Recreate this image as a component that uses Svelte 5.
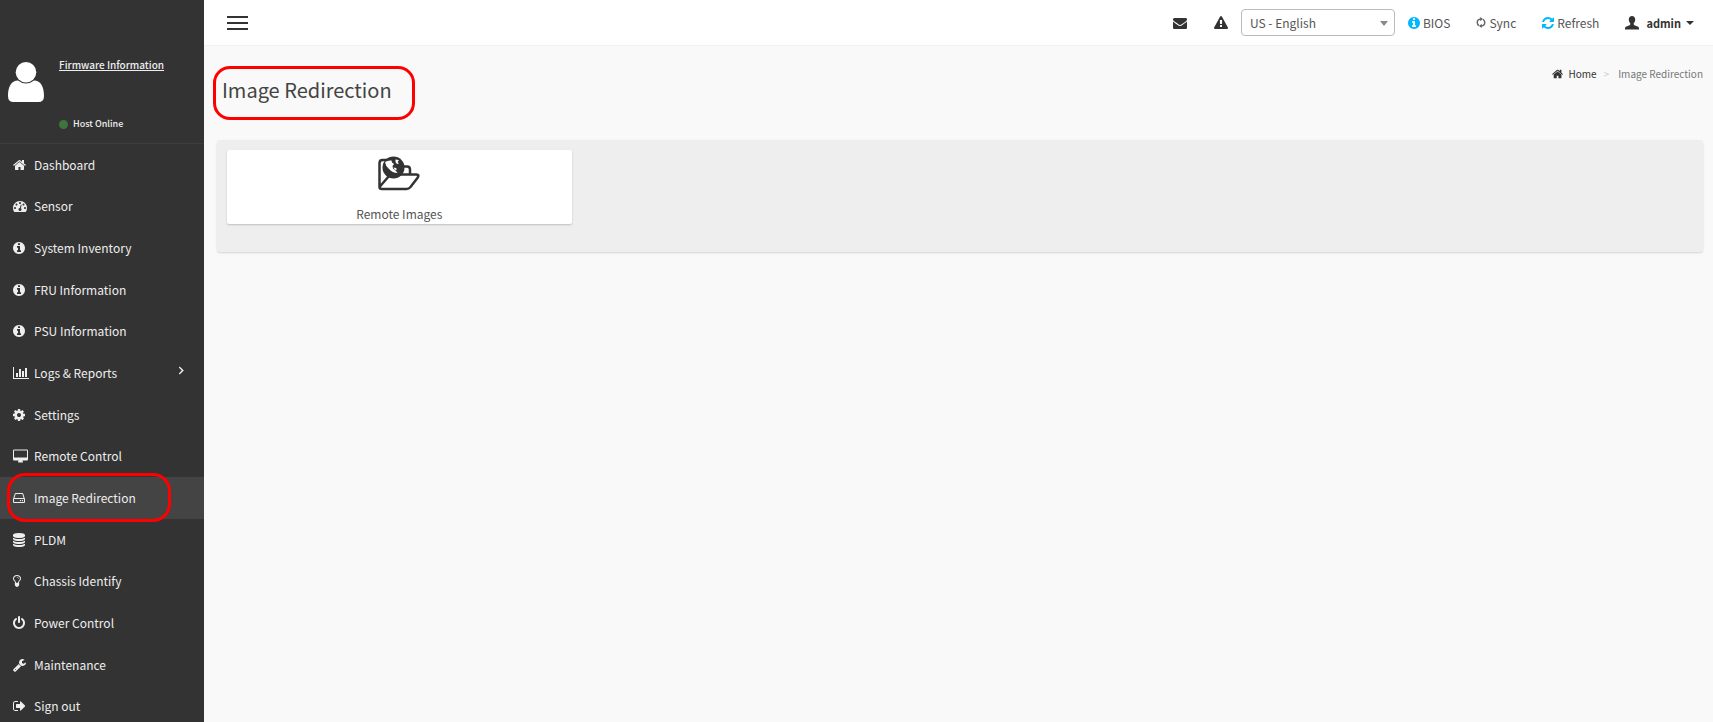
<script>
    const icons = {
        home: { box: "64 0 1664 1792", d: "M1472 992v480q0 26-19 45t-45 19h-384v-384h-256v384h-384q-26 0-45-19t-19-45v-480q0-1 .5-3t.5-3l575-474 575 474q1 2 1 6zm223-69l-62 74q-8 9-21 11h-3q-13 0-21-7l-692-577-692 577q-12 8-24 7-13-2-21-11l-62-74q-8-10-7-23.5t11-21.5l719-599q32-26 76-26t76 26l244 204v-195q0-14 9-23t23-9h192q14 0 23 9t9 23v408l219 182q10 8 11 21.5t-7 23.5z" },
        gauge: { box: "0 0 1792 1792", d: "M384 1152q0-53-37.5-90.5t-90.5-37.5-90.5 37.5-37.5 90.5 37.5 90.5 90.5 37.5 90.5-37.5 37.5-90.5zm192-448q0-53-37.5-90.5t-90.5-37.5-90.5 37.5-37.5 90.5 37.5 90.5 90.5 37.5 90.5-37.5 37.5-90.5zm428 481l101-382q6-26-7.5-48.5t-38.5-29.5-48 6.5-30 39.5l-101 382q-60 5-107 43.5t-63 98.5q-20 77 20 146t117 89 146-20 89-117q16-60-6-117t-72-91zm660-33q0-53-37.5-90.5t-90.5-37.5-90.5 37.5-37.5 90.5 37.5 90.5 90.5 37.5 90.5-37.5 37.5-90.5zm-640-640q0-53-37.5-90.5t-90.5-37.5-90.5 37.5-37.5 90.5 37.5 90.5 90.5 37.5 90.5-37.5 37.5-90.5zm448 192q0-53-37.5-90.5t-90.5-37.5-90.5 37.5-37.5 90.5 37.5 90.5 90.5 37.5 90.5-37.5 37.5-90.5zm320 448q0 261-141 483-19 29-54 29h-1402q-35 0-54-29-141-221-141-483 0-182 71-348t191-286 286-191 348-71 348 71 286 191 191 286 71 348z" },
        info: { box: "128 0 1536 1792", d: "M1152 1376v-160q0-14-9-23t-23-9h-96v-512q0-14-9-23t-23-9h-320q-14 0-23 9t-9 23v160q0 14 9 23t23 9h96v320h-96q-14 0-23 9t-9 23v160q0 14 9 23t23 9h448q14 0 23-9t9-23zm-128-896v-160q0-14-9-23t-23-9h-192q-14 0-23 9t-9 23v160q0 14 9 23t23 9h192q14 0 23-9t9-23zm640 416q0 209-103 385.5t-279.5 279.5-385.5 103-385.5-103-279.5-279.5-103-385.5 103-385.5 279.5-279.5 385.5-103 385.5 103 279.5 279.5 103 385.5z" },
        chart: { box: "0 0 2048 1792", d: "M640 896v512h-256v-512h256zm384-512v1024h-256v-1024h256zm1024 1152v128h-2048v-1536h128v1408h1920zm-640-896v768h-256v-768h256zm384-384v1152h-256v-1152h256z" },
        cog: { box: "128 0 1536 1792", d: "M1152 896q0-106-75-181t-181-75-181 75-75 181 75 181 181 75 181-75 75-181zm512-109v222q0 12-8 23t-20 13l-185 28q-19 54-39 91 35 50 107 138 10 12 10 25t-9 23q-27 37-99 108t-94 71q-12 0-26-9l-138-108q-44 23-91 38-16 136-29 186-7 28-36 28h-222q-14 0-24.5-8.5t-11.5-21.5l-28-184q-49-16-90-37l-141 107q-10 9-25 9-14 0-25-11-126-114-165-168-7-10-7-23 0-12 8-23 15-21 51-66.5t54-70.5q-27-50-41-99l-183-27q-13-2-21-12.5t-8-23.5v-222q0-12 8-23t19-13l186-28q14-46 39-92-40-57-107-138-10-12-10-24 0-10 9-23 26-36 98.5-107.5t94.5-71.5q13 0 26 10l138 107q44-23 91-38 16-136 29-186 7-28 36-28h222q14 0 24.5 8.5t11.5 21.5l28 184q49 16 90 37l142-107q9-9 24-9 13 0 25 10 129 119 165 170 7 8 7 22 0 12-8 23-15 21-51 66.5t-54 70.5q26 50 41 98l183 28q13 2 21 12.5t8 23.5z" },
        desktop: { box: "64 -64 1920 1792", d: "M1856 992v-832q0-13-9.5-22.5t-22.5-9.5h-1600q-13 0-22.5 9.5t-9.5 22.5v832q0 13 9.5 22.5t22.5 9.5h1600q13 0 22.5-9.5t9.5-22.5zm128-832v1088q0 66-47 113t-113 47h-544q0 37 16 77.5t32 71 16 43.5q0 26-19 45t-45 19h-512q-26 0-45-19t-19-45q0-14 16-44t32-70 16-78h-544q-66 0-113-47t-47-113v-1088q0-66 47-113t113-47h1600q66 0 113 47t47 113z" },
        hdd: { box: "128 0 1536 1792", d: "M1168 1216q0 33-23.5 56.5t-56.5 23.5-56.5-23.5-23.5-56.5 23.5-56.5 56.5-23.5 56.5 23.5 23.5 56.5zm256 0q0 33-23.5 56.5t-56.5 23.5-56.5-23.5-23.5-56.5 23.5-56.5 56.5-23.5 56.5 23.5 23.5 56.5zm112 160v-320q0-13-9.5-22.5t-22.5-9.5h-1216q-13 0-22.5 9.5t-9.5 22.5v320q0 13 9.5 22.5t22.5 9.5h1216q13 0 22.5-9.5t9.5-22.5zm-1230-480h1180l-157-482q-4-13-16-21.5t-26-8.5h-782q-14 0-26 8.5t-16 21.5zm1358 160v320q0 66-47 113t-113 47h-1216q-66 0-113-47t-47-113v-320q0-25 16-75l197-606q17-53 63-86t101-33h782q55 0 101 33t63 86l197 606q16 50 16 75z" },
        database: { box: "128 0 1536 1792", d: "M896 768q237 0 443-43t325-127v170q0 69-103 128t-280 93.5-385 34.5-385-34.5-280-93.5-103-128v-170q119 84 325 127t443 43zm0 768q237 0 443-43t325-127v170q0 69-103 128t-280 93.5-385 34.5-385-34.5-280-93.5-103-128v-170q119 84 325 127t443 43zm0-384q237 0 443-43t325-127v170q0 69-103 128t-280 93.5-385 34.5-385-34.5-280-93.5-103-128v-170q119 84 325 127t443 43zm0-1152q208 0 385 34.5t280 93.5 103 128v128q0 69-103 128t-280 93.5-385 34.5-385-34.5-280-93.5-103-128v-128q0-69 103-128t280-93.5 385-34.5z" },
        bulb: { box: "384 0 1024 1792", d: "M1120 576q0 13-9.5 22.5t-22.5 9.5-22.5-9.5-9.5-22.5q0-46-54-71t-106-25q-13 0-22.5-9.5t-9.5-22.5 9.5-22.5 22.5-9.5q50 0 99.5 16t87 54 37.5 90zm160 0q0-72-34.5-134t-90-101.5-123-62-136.5-22.5-136.5 22.5-123 62-90 101.5-34.5 134q0 101 68 180 10 11 30.5 33t30.5 33q128 153 141 298h228q13-145 141-298 10-11 30.5-33t30.5-33q68-79 68-180zm128 0q0 155-103 268-45 49-74.5 87t-59.5 95.5-34 107.5q47 28 47 82 0 37-25 64 25 27 25 64 0 52-45 81 13 23 13 47 0 46-31.5 71t-77.5 25q-20 44-60 70t-87 26-87-26-60-70q-46 0-77.5-25t-31.5-71q0-24 13-47-45-29-45-81 0-37 25-64-25-27-25-64 0-54 47-82-4-50-34-107.5t-59.5-95.5-74.5-87q-103-113-103-268 0-99 44.5-184.5t117-142 164-89 186.5-32.5 186.5 32.5 164 89 117 142 44.5 184.5z" },
        power: { box: "128 0 1536 1792", d: "M1664 896q0 156-61 298t-164 245-245 164-298 61-298-61-245-164-164-245-61-298q0-182 80.5-343t226.5-270q43-32 95.5-25t83.5 50q32 42 24.5 94.5t-49.5 84.5q-98 74-151.5 181t-53.5 228q0 104 40.5 198.5t109.5 163.5 163.5 109.5 198.5 40.5 198.5-40.5 163.5-109.5 109.5-163.5 40.5-198.5q0-121-53.5-228t-151.5-181q-42-32-49.5-84.5t24.5-94.5q31-43 84-50t95 25q146 109 226.5 270t80.5 343zm-640-768v640q0 52-38 90t-90 38-90-38-38-90v-640q0-52 38-90t90-38 90 38 38 90z" },
        wrench: { box: "64 0 1664 1792", d: "M448 1472q0-26-19-45t-45-19-45 19-19 45 19 45 45 19 45-19 19-45zm644-420l-682 682q-37 37-90 37-52 0-91-37l-106-108q-38-36-38-90 0-53 38-91l681-681q39 98 114.5 173.5t173.5 114.5zm634-435q0 39-23 106-47 134-164.5 217.5t-258.5 83.5q-185 0-316.5-131.5t-131.5-316.5 131.5-316.5 316.5-131.5q58 0 121.5 16.5t107.5 46.5q16 11 16 28t-16 28l-293 169v224l193 107q5-3 79-48.5t135.5-81 70.5-35.5q15 0 23.5 10t8.5 25z" },
        signout: { box: "64 0 1568 1792", d: "M704 1440q0 4 1 20t.5 26.5-3 23.5-10 19.5-20.5 6.5h-320q-119 0-203.5-84.5t-84.5-203.5v-704q0-119 84.5-203.5t203.5-84.5h320q13 0 22.5 9.5t9.5 22.5q0 4 1 20t.5 26.5-3 23.5-10 19.5-20.5 6.5h-320q-66 0-113 47t-47 113v704q0 66 47 113t113 47h312l11.5 1 11.5 3 8 5.5 7 9 2 13.5zm928-544q0 26-19 45l-544 544q-19 19-45 19t-45-19-19-45v-288h-448q-26 0-45-19t-19-45v-384q0-26 19-45t45-19h448v-288q0-26 19-45t45-19 45 19l544 544q19 19 19 45z" },
        angle: { box: "576 0 640 1792", d: "M1171 960q0 13-10 23l-466 466q-10 10-23 10t-23-10l-80-80q-10-10-10-23t10-23l363-363-363-363q-10-10-10-23t10-23l80-80q10-10 23-10t23 10l466 466q10 10 10 23z" },
        envelope: { box: "0 0 1792 1792", d: "M1792 710v794q0 66-47 113t-113 47h-1472q-66 0-113-47t-47-113v-794q44 49 101 87 362 246 497 345 57 42 92.5 65.5t94.5 48 110 24.5h2q51 0 110-24.5t94.5-48 92.5-65.5q170-123 498-345 57-39 100-87zm0-294q0 79-49 151t-122 123q-376 261-468 325-10 7-42.5 31t-54 38.5-52 32.5-57.5 27-50 9h-2q-23 0-50-9t-57.5-27-52-32.5-54-38.5-42.5-31q-91-64-262-182.5t-205-142.5q-62-42-117-115.5t-55-136.5q0-78 41.5-130t118.5-52h1472q65 0 112.5 47t47.5 113z" },
        warning: { box: "0 0 1792 1792", d: "M1024 1375v-190q0-14-9.5-23.5t-22.5-9.5h-192q-13 0-22.5 9.5t-9.5 23.5v190q0 14 9.5 23.5t22.5 9.5h192q13 0 22.5-9.5t9.5-23.5zm-2-374l18-459q0-12-10-19-13-11-24-11h-220q-11 0-24 11-10 7-10 21l17 457q0 10 10 16.5t24 6.5h185q14 0 23.5-6.5t10.5-16.5zm-14-934l768 1408q35 63-2 126-17 29-46.5 46t-63.5 17h-1536q-34 0-63.5-17t-46.5-46q-37-63-2-126l768-1408q17-31 47-49t65-18 65 18 47 49z" },
        refresh: { box: "128 0 1536 1792", d: "M1639 1056q0 5-1 7-64 268-268 434.5t-478 166.5q-146 0-282.5-55t-243.5-157l-129 129q-19 19-45 19t-45-19-19-45v-448q0-26 19-45t45-19h448q26 0 45 19t19 45-19 45l-137 137q71 66 161 102t187 36q134 0 250-65t186-179q11-17 53-117 8-23 30-23h192q13 0 22.5 9.5t9.5 22.5zm25-800v448q0 26-19 45t-45 19h-448q-26 0-45-19t-19-45 19-45l138-138q-148-137-349-137-134 0-250 65t-186 179q-11 17-53 117-8 23-30 23h-199q-13 0-22.5-9.5t-9.5-22.5v-7q65-268 270-434.5t480-166.5q146 0 284 55.5t245 156.5l130-129q19-19 45-19t45 19 19 45z" },
        user: { box: "0 0 1200 1200", d: "M600 0c-165 0-275 115-275 290 0 130 50 250 125 320v100c0 40-20 60-60 78l-260 112c-90 40-130 80-130 160v90h1200v-90c0-80-40-120-130-160l-260-112c-40-18-60-38-60-78v-100c75-70 125-190 125-320 0-175-110-290-275-290z" },
    };

    const menu = [
        { label: "Dashboard", icon: "home" },
        { label: "Sensor", icon: "gauge" },
        { label: "System Inventory", icon: "info" },
        { label: "FRU Information", icon: "info" },
        { label: "PSU Information", icon: "info" },
        { label: "Logs & Reports", icon: "chart", children: true },
        { label: "Settings", icon: "cog" },
        { label: "Remote Control", icon: "desktop" },
        { label: "Image Redirection", icon: "hdd", marked: true },
        { label: "PLDM", icon: "database" },
        { label: "Chassis Identify", icon: "bulb" },
        { label: "Power Control", icon: "power" },
        { label: "Maintenance", icon: "wrench" },
        { label: "Sign out", icon: "signout" },
    ];

    let active = $state("Image Redirection");
    let language = $state("US - English");
    let collapsed = $state(false);
</script>

{#snippet icon(name)}
    <svg class="icon" viewBox={icons[name].box} aria-hidden="true"><path d={icons[name].d} /></svg>
{/snippet}

<div class="page">
    {#if !collapsed}
        <aside>
            <div class="host">
                <svg class="avatar" viewBox="0 0 36 40" aria-hidden="true">
                    <path d="M10 18.500C3 18.500 0 25 0 34q0 6 5.500 6h25q5.500 0 5.500-6C36 25 33 18.500 26 18.500q-3.500 3-8 3t-8-3z" />
                    <circle cx="18" cy="10.300" r="10.300" />
                </svg>
                <div class="host-text">
                    <a href="#firmware">Firmware Information</a>
                    <span class="status"><i></i>Host Online</span>
                </div>
            </div>
            <nav>
                <ul>
                    {#each menu as item}
                        <li class:active={active == item.label}>
                            <a href="#{item.icon}" onclick={() => (active = item.label)}>
                                <span class="menu-icon">{@render icon(item.icon)}</span>
                                {item.label}
                                {#if item.children}
                                    <span class="arrow">{@render icon("angle")}</span>
                                {/if}
                            </a>
                            {#if item.marked}<span class="mark"></span>{/if}
                        </li>
                    {/each}
                </ul>
            </nav>
        </aside>
    {/if}

    <div class="content">
        <header>
            <button class="toggle" aria-label="Toggle navigation" onclick={() => (collapsed = !collapsed)}>
                <span></span><span></span><span></span>
            </button>
            <div class="tools">
                <button class="dark mail" aria-label="Messages">{@render icon("envelope")}</button>
                <button class="dark alert" aria-label="Alerts">{@render icon("warning")}</button>
                <div class="select">
                    <select aria-label="Language" bind:value={language}>
                        <option>US - English</option>
                    </select>
                </div>
                <button class="tool"><span class="blue">{@render icon("info")}</span>BIOS</button>
                <button class="tool">
                    <svg class="loop" viewBox="0 0 20 22" aria-hidden="true">
                        <path d="M6 17.500Q2.500 15 2.500 11 2.500 4.500 9.500 4H12M14 4.500Q17.500 7 17.500 11 17.500 17.500 10.500 18H8" />
                        <path class="tip" d="M8.500 0L14 4 8.500 8.500zM11.500 13.500L6 18l5.500 4z" />
                    </svg>Sync
                </button>
                <button class="tool"><span class="blue">{@render icon("refresh")}</span>Refresh</button>
                <button class="dark admin">{@render icon("user")}<b>admin</b><i class="caret"></i></button>
            </div>
        </header>

        <main>
            <div class="heading">
                <h1>Image Redirection</h1>
                <div class="crumbs">
                    <a href="#home">{@render icon("home")}Home</a>
                    <span class="sep">&gt;</span>
                    <span>Image Redirection</span>
                </div>
            </div>
            <section>
                <a class="card" href="#remote-images">
                    <svg class="folder" viewBox="0 0 42 35" aria-hidden="true">
                        <path class="line" d="M1.500 31V7q0-3 3-3H14q3 0 3 3v3.500h12q3 0 3 3V18M1.500 31L11 20q1.500-1.500 3.500-1.500H38q3.500 0 1.800 3L32.500 31q-1.700 2-4 2H4q-2.500 0-2.500-2" />
                        <circle class="globe" cx="15.500" cy="11.500" r="11" />
                        <path class="land" d="M7 6q3-2 6.500-1.500l.5 2 2 1.500-1.500 2 .5 2.500 3 2.500 1.500 2q-5 0-8.500-4Q7.500 10 7 6zM17.500 3.500q2 0 3.500 1l-1.500 1.500 1.500 1.500-2 .5-1.500-2zM15.500 11.500l2.500.5 1 1.500-2 .5z" />
                    </svg>
                    <span>Remote Images</span>
                </a>
            </section>
        </main>
    </div>
</div>

<style>
    :global(body) {
        background: #f9f9f9;
        font-family: "Source Sans Pro", "Noto Sans CJK SC", sans-serif;
        font-size: 12px;
        line-height: 18px;
        color: #555;
        overflow: hidden;
    }
    a {
        color: inherit;
        text-decoration: none;
    }
    button {
        display: flex;
        align-items: center;
        padding: 0;
        border: 0;
        background: none;
        font: inherit;
        color: inherit;
        cursor: pointer;
    }
    .icon {
        display: block;
        height: 14px;
        fill: currentColor;
    }
    .page {
        display: flex;
        height: 100vh;
    }

    aside {
        flex: 0 0 204px;
        background: #333;
        color: #eee;
    }
    .host {
        display: flex;
        gap: 15px;
        height: 87px;
        padding: 56px 8px 0;
        border-bottom: 1px solid #3d3d3d;
    }
    .avatar {
        width: 36px;
        height: 40px;
        margin-top: 6px;
        fill: #fff;
    }
    .host-text {
        display: flex;
        flex-direction: column;
        justify-content: space-between;
        padding-bottom: 10px;
        font-size: 10px;
        font-weight: 500;
    }
    .host-text a {
        text-decoration: underline;
    }
    .status {
        display: flex;
        align-items: center;
        gap: 5px;
        font-size: 9px;
    }
    .status i {
        width: 9px;
        height: 9px;
        border-radius: 50%;
        background: #3c763d;
    }
    ul {
        list-style: none;
        margin: 0;
        padding: 0;
    }
    li {
        position: relative;
    }
    li a {
        display: flex;
        align-items: center;
        height: 42px;
        padding: 0 20px 0 13px;
    }
    li:nth-child(3n + 1) a {
        height: 41px;
    }
    li.active {
        background: #444;
    }
    .menu-icon {
        width: 21px;
    }
    .arrow {
        margin-left: auto;
        padding-bottom: 6px;
    }
    /* red outline round the highlighted menu entry */
    .mark {
        position: absolute;
        inset: -4px 33px -3px 7px;
        border: 3px solid #f00;
        border-radius: 18px;
        pointer-events: none;
    }

    .content {
        flex: 1;
        min-width: 0;
    }
    header {
        display: flex;
        align-items: center;
        justify-content: space-between;
        height: 45px;
        padding: 0 19px 0 23px;
        background: #fff;
        border-bottom: 1px solid #f2f2f2;
    }
    .toggle {
        flex-direction: column;
        gap: 4px;
    }
    .toggle span {
        width: 21px;
        height: 2px;
        background: #333;
    }
    .tools {
        display: flex;
        align-items: center;
    }
    .dark {
        color: #333;
    }
    .mail {
        margin-right: 27px;
    }
    .alert {
        margin-right: 13px;
    }
    .select {
        position: relative;
        margin-right: 13px;
    }
    .select::after {
        content: "";
        position: absolute;
        top: 12px;
        right: 7px;
        border: 4px solid transparent;
        border-top: 5px solid #888;
        border-bottom: 0;
        pointer-events: none;
    }
    select {
        display: block;
        appearance: none;
        width: 154px;
        height: 27px;
        padding: 0 8px;
        border: 1px solid #bbb;
        border-radius: 4px;
        background: #fff;
        font: inherit;
        color: #555;
    }
    .tool {
        gap: 3px;
        margin-right: 26px;
    }
    .blue {
        color: #00b8ff;
    }
    .loop {
        width: 10px;
        height: 11px;
        fill: none;
        stroke: #666;
        stroke-width: 3;
    }
    .loop .tip {
        fill: #666;
        stroke: none;
    }
    .admin b {
        margin: 0 5px 0 7px;
        font-size: 11px;
    }
    .caret {
        border: 4px solid transparent;
        border-top-color: #333;
        border-bottom: 0;
    }

    main {
        padding: 20px 10px 0 13px;
    }
    .heading {
        display: flex;
        justify-content: space-between;
        align-items: flex-start;
    }
    h1 {
        margin: 0 0 20px -4px;
        padding: 6px 20px 12px 6px;
        border: 3px solid #f00;
        border-radius: 17px;
        font-size: 20px;
        line-height: 30px;
        font-weight: 400;
        color: #444;
    }
    .crumbs {
        display: flex;
        font-size: 10px;
        line-height: 16px;
        color: #777;
    }
    .crumbs a {
        display: flex;
        align-items: center;
        gap: 5px;
        color: #333;
    }
    .crumbs .icon {
        height: 12px;
    }
    .sep {
        margin: 0 9px 0 7px;
        color: #ccc;
    }
    section {
        padding: 10px 10px 28px;
        border-radius: 3px;
        background: #eee;
        box-shadow: 0 1px 2px rgba(0, 0, 0, 0.15);
    }
    .card {
        display: flex;
        flex-direction: column;
        align-items: center;
        gap: 14px;
        width: calc(25% - 22px);
        min-width: 180px;
        padding: 6px 0 1px;
        border-radius: 2px;
        background: #fff;
        box-shadow: 0 1px 2px rgba(0, 0, 0, 0.2);
    }
    .folder {
        width: 42px;
        height: 35px;
    }
    .line {
        fill: none;
        stroke: #333;
        stroke-width: 2.500;
        stroke-linejoin: round;
    }
    .globe {
        fill: #333;
    }
    .land {
        fill: #fff;
    }
</style>
